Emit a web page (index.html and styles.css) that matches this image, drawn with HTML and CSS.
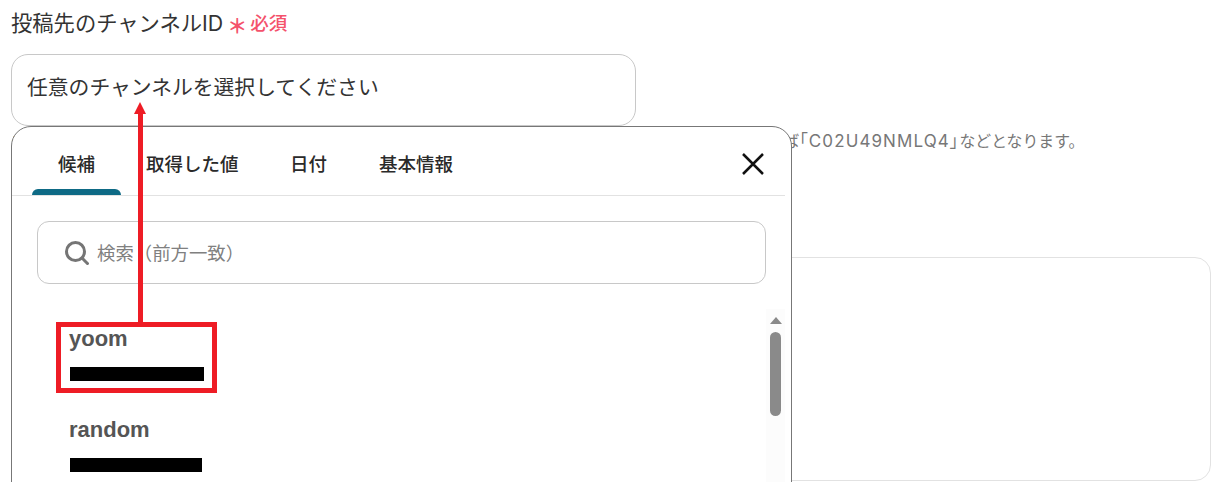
FILE: index.html
```html
<!DOCTYPE html>
<html lang="ja">
<head>
<meta charset="UTF-8">
<title>投稿先のチャンネルID</title>
<link rel="stylesheet" href="styles.css">
</head>
<body>

<div class="form">
  <div class="label-row">
    <label class="label">投稿先のチャンネルID</label>
    <span class="req-mark">＊</span>
    <span class="req">必須</span>
  </div>
  <div class="input">任意のチャンネルを選択してください</div>
  <p class="help">チャンネルIDを入力してください。チャンネルIDはチャンネルの詳細画面の一番下に表示されています。例えば<span class="code">「C02U49NMLQ4」</span>などとなります。</p>
  <div class="textbox"></div>
</div>

<!-- 候補ポップアップ -->
<div class="popup">
  <div class="tabs">
    <button class="tab active">候補</button>
    <button class="tab">取得した値</button>
    <button class="tab">日付</button>
    <button class="tab">基本情報</button>
    <svg class="close" width="24" height="24" viewBox="0 0 24 24"><path d="M2 2 L22 22 M22 2 L2 22" stroke="#111" stroke-width="2.5" fill="none"/></svg>
  </div>
  <div class="search">
    <svg width="24" height="24" viewBox="0 0 24 24"><circle cx="10.5" cy="10.5" r="9" stroke="#757575" stroke-width="3" fill="none"/><path d="M17 17 L23.5 23.5" stroke="#757575" stroke-width="3" fill="none"/></svg>
    <span class="search-text">検索（前方一致）</span>
  </div>
  <div class="list-wrap">
    <div class="list">
      <div class="item"><p class="item-name">yoom</p><div class="redact w1"></div></div>
      <div class="item"><p class="item-name">random</p><div class="redact w2"></div></div>
    </div>
    <div class="scrollbar">
      <div class="arrow"></div>
      <div class="thumb"></div>
    </div>
  </div>
</div>

<!-- 注釈（赤枠と矢印） -->
<div class="mark-box"></div>
<div class="mark-line"></div>
<div class="mark-head"></div>

</body>
</html>
```

FILE: styles.css
```css
*{box-sizing:border-box;margin:0;padding:0}
html,body{height:482px;overflow:hidden}
body{position:relative;background:#fff;color:#333;
     font-family:Inter,"Noto Sans CJK JP",sans-serif}

.form{padding:11px 6px 0 11px}
.label-row{display:flex;align-items:center;height:24px}
.label{font-size:21.3px;line-height:24px;color:#333}
.req-mark{font-size:20px;line-height:24px;font-weight:700;color:#f4526c;margin:7px 0 0 4px;height:24px}
.req{font-size:18.5px;line-height:24px;font-weight:500;color:#f4526c;margin-left:3px}
.input{height:72px;margin:19px 0 0;width:625px;padding:0 15px 9px;
       display:flex;align-items:center;font-size:20.8px;color:#333;
       border:1px solid #c8c8c8;border-radius:17px}
.help{font-size:15.87px;line-height:20px;color:#777;margin-top:5px;white-space:nowrap}
.code{font-size:17px;letter-spacing:1.1px;font-feature-settings:"palt"}
.textbox{height:224px;margin-top:105px;border:1px solid #e2e2e2;border-radius:16px}

.popup{position:absolute;left:11px;top:126px;width:781px;height:380px;background:#fff;
       border:1.5px solid #777;border-radius:20px;padding:0 6px 0 0}
.tabs{display:flex;align-items:flex-start;height:69px;border-bottom:1px solid #e2e2e2;position:relative}
.tab{position:relative;border:none;background:none;font:inherit;font-size:18.5px;font-weight:500;color:#2a2a2a;
     height:68px;padding:5px 0 0;line-height:24px;text-align:center;white-space:nowrap}
.tab:nth-child(1){width:89px;margin-left:20px}
.tab:nth-child(2){margin-left:25px;width:92px}
.tab:nth-child(3){margin-left:52px;width:36px}
.tab:nth-child(4){margin-left:52px;width:76px}
.tab.active::after{content:"";position:absolute;left:0;right:0;bottom:0;height:6px;
                   background:#0e6a85;border-radius:6px 6px 0 0}
.close{position:absolute;left:729px;top:25px}
.search{display:flex;align-items:center;gap:8px;height:63px;margin:25px 19px 0 25px;padding-left:27px;
        border:1px solid #c8c8c8;border-radius:12px}
.search-text{font-size:18.4px;color:#808080;margin-top:-2px}
.list-wrap{display:flex;margin-top:25px}
.list{flex:1;padding:15px 0 0 57px}
.item{height:91px}
.item-name{font-family:"Liberation Sans",sans-serif;font-size:22px;font-weight:700;line-height:30px;color:#555}
.redact{height:14px;background:#000;margin-top:13px;margin-left:1px}
.w1{width:134px}
.w2{width:132px}
.scrollbar{width:19px;background:#fcfcfc;display:flex;flex-direction:column;align-items:center;height:175px}
.arrow{width:0;height:0;margin-top:8px;border:6.5px solid transparent;border-top:0;border-bottom:7px solid #8a8a8a}
.thumb{width:11px;height:84px;background:#8a8a8a;border-radius:6px;margin-top:8px}

.mark-box{position:absolute;left:56px;top:322px;width:161px;height:71px;border:5px solid #ee1c25}
.mark-line{position:absolute;left:138px;top:112px;width:5px;height:212px;background:#ee1c25}
.mark-head{position:absolute;left:134px;top:102px;width:0;height:0;
           border-left:6.5px solid transparent;border-right:6.5px solid transparent;border-bottom:12px solid #ee1c25}
```
